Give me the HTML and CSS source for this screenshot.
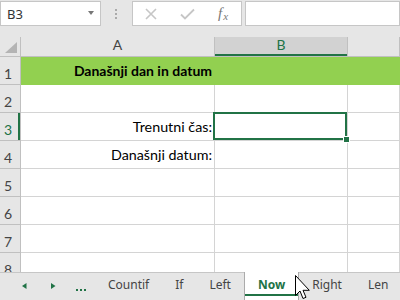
FILE: index.html
```html
<!DOCTYPE html>
<html>
  <head>
    <meta charset="UTF-8">
    <title>Današnji dan in datum</title>
    <link rel="stylesheet" href="styles.css">
  </head>
  <body>
    <div class="formulaBar">
      <div class="nameBox"><span>B3</span><span class="dropArrow"></span></div>
      <div class="barDots">
        <svg width="3" height="10" viewBox="0 0 3 10"><rect x="0" y="0" width="2" height="2"/><rect x="0" y="4" width="2" height="2"/><rect x="0" y="8" width="2" height="2"/></svg>
      </div>
      <div class="fxBox">
        <span class="fxButton">
          <svg width="12" height="12" viewBox="0 0 12 12"><path d="M1 1 L11 11 M11 1 L1 11" stroke="#c6c6c6" stroke-width="1.6" fill="none"/></svg>
        </span>
        <span class="fxButton">
          <svg width="15" height="12" viewBox="0 0 15 12"><path d="M1 6.5 L5 10.5 L14 1.5" stroke="#c6c6c6" stroke-width="1.8" fill="none"/></svg>
        </span>
        <span class="fxButton fxLabel"><i>f</i><span class="fxSub">x</span></span>
      </div>
      <div class="formulaInput"></div>
    </div>

    <div class="sheet">
      <div class="cell corner"><span class="cornerMark"></span></div>
      <div class="cell colHead">A</div>
      <div class="cell colHead colSelected">B</div>
      <div class="cell colHead"></div>

      <div class="cell rowHead">1</div>
      <div class="cell filled title">Današnji dan in datum</div>
      <div class="cell filled"></div>
      <div class="cell filled"></div>

      <div class="cell rowHead">2</div>
      <div class="cell"></div>
      <div class="cell"></div>
      <div class="cell"></div>

      <div class="cell rowHead rowSelected">3</div>
      <div class="cell">Trenutni čas:</div>
      <div class="cell activeCell"></div>
      <div class="cell"></div>

      <div class="cell rowHead">4</div>
      <div class="cell">Današnji datum:</div>
      <div class="cell"></div>
      <div class="cell"></div>

      <div class="cell rowHead">5</div>
      <div class="cell"></div>
      <div class="cell"></div>
      <div class="cell"></div>

      <div class="cell rowHead">6</div>
      <div class="cell"></div>
      <div class="cell"></div>
      <div class="cell"></div>

      <div class="cell rowHead">7</div>
      <div class="cell"></div>
      <div class="cell"></div>
      <div class="cell"></div>

      <div class="cell rowHead">8</div>
      <div class="cell"></div>
      <div class="cell"></div>
      <div class="cell"></div>
    </div>

    <div class="tabBar">
      <div class="tabNav">
        <svg width="95" height="27" viewBox="0 0 95 27">
          <path d="M26.5 10 L26.5 16 L22 13 Z"/>
          <path d="M51 10 L51 16 L55.5 13 Z"/>
          <rect x="76" y="16" width="2" height="2"/>
          <rect x="80" y="16" width="2" height="2"/>
          <rect x="84" y="16" width="2" height="2"/>
        </svg>
      </div>
      <span class="tabSep"></span>
      <span class="tab">Countif</span>
      <span class="tabSep"></span>
      <span class="tab">If</span>
      <span class="tabSep"></span>
      <span class="tab">Left</span>
      <span class="tab activeTab">Now</span>
      <span class="tab">Right</span>
      <span class="tabSep"></span>
      <span class="tab">Len</span>
    </div>

    <svg class="pointer" width="16" height="26" viewBox="0 0 16 26">
      <path d="M0.5 0.5 L0.5 20.5 L5 16 L8 23.5 L11 22.3 L8 15.3 L14.3 15.3 Z" fill="#fff" stroke="#000" stroke-width="1"/>
    </svg>
  </body>
</html>
```

FILE: styles.css
```css
:root {
  --chrome: rgb(230, 230, 230);
  --chromeBorder: rgb(198, 198, 198);
  --headBorder: rgb(192, 192, 192);
  --grid: rgb(212, 212, 212);
  --excelGreen: rgb(33, 115, 70);
  --fill: rgb(146, 208, 80);
  --tabLine: rgb(171, 171, 171);
}
body {
  margin: 0;
  width: 400px;
  height: 300px;
  overflow: hidden;
  position: relative;
  background-color: var(--chrome);
  font-family: Lato, "Liberation Sans", sans-serif;
}

/* formula bar */
.formulaBar {
  display: flex;
  height: 25px;
  padding-top: 1px;
  margin-bottom: 11px;
}
.nameBox {
  box-sizing: border-box;
  width: 101px;
  border: 1px solid var(--chromeBorder);
  background-color: #fff;
  display: flex;
  align-items: center;
  justify-content: space-between;
  padding: 0 6px 0 6px;
  font: 13px "Noto Sans", sans-serif;
  color: #333;
}
.dropArrow {
  width: 0;
  height: 0;
  border-left: 3.5px solid transparent;
  border-right: 3.5px solid transparent;
  border-top: 4px solid #777;
  margin-top: -2px;
}
.barDots {
  width: 31px;
  display: flex;
  align-items: center;
  justify-content: center;
  fill: #aaa;
}
.fxBox {
  box-sizing: border-box;
  width: 110px;
  border: 1px solid var(--chromeBorder);
  background-color: #fff;
  display: flex;
}
.fxButton {
  width: 36px;
  display: flex;
  align-items: center;
  justify-content: center;
}
.fxLabel {
  font-family: "Liberation Serif", serif;
  font-size: 15px;
  color: #777;
}
.fxSub {
  font-style: italic;
  font-size: 11px;
  margin-top: 4px;
  margin-left: 1px;
}
.formulaInput {
  flex: 1;
  margin-left: 3px;
  border: 1px solid var(--chromeBorder);
  background-color: #fff;
}

/* grid */
.sheet {
  height: 235px;
  overflow: hidden;
  display: grid;
  grid-template-columns: 21px 194px 133px 1fr;
  grid-template-rows: 20px;
  grid-auto-rows: 28px;
  background-color: #fff;
}
.cell {
  box-sizing: border-box;
  border-right: 1px solid var(--grid);
  border-bottom: 1px solid var(--grid);
  font-size: 14.3px;
  line-height: 27px;
  text-align: right;
  padding-right: 2px;
  white-space: nowrap;
  color: #000;
}
.corner, .colHead, .rowHead {
  background-color: var(--chrome);
  border-color: var(--headBorder);
  color: #444;
}
.corner {
  display: flex;
  align-items: flex-end;
  justify-content: flex-end;
  padding: 0 3px 3px 0;
}
.cornerMark {
  width: 12px;
  height: 11px;
  background-color: #b4b4b4;
  clip-path: polygon(100% 0, 100% 100%, 0 100%);
}
.colHead {
  text-align: center;
  font-size: 14px;
  line-height: 15px;
  padding: 0;
}
.colSelected {
  background-color: rgb(210, 210, 210);
  color: var(--excelGreen);
  box-shadow: inset 0 -2px var(--excelGreen);
}
.rowHead {
  text-align: left;
  font-size: 14px;
  line-height: 21px;
  padding: 6px 0 0 4px;
}
.rowSelected {
  color: var(--excelGreen);
  box-shadow: inset -2px 0 var(--excelGreen);
}
.filled {
  background-color: var(--fill);
  border-color: var(--fill);
}
.title {
  font-weight: bold;
  font-size: 14px;
}
.activeCell { position: relative; }
.activeCell::before {
  content: "";
  position: absolute;
  top: -1px;
  left: -2px;
  right: 0;
  bottom: 0;
  border: 2px solid var(--excelGreen);
}
.activeCell::after {
  content: "";
  position: absolute;
  right: -3px;
  bottom: -3px;
  width: 5px;
  height: 5px;
  border: 1px solid #fff;
  background-color: var(--excelGreen);
}

/* sheet tabs */
.tabBar {
  box-sizing: border-box;
  height: 28px;
  border-top: 1px solid var(--chromeBorder);
  display: flex;
  align-items: flex-start;
  font: 12px "Noto Sans", sans-serif;
  color: #444;
  white-space: nowrap;
}
.tabNav {
  width: 95px;
  height: 27px;
  fill: var(--excelGreen);
}
.tabSep {
  width: 1px;
  height: 19px;
  margin-top: 4px;
  background-color: var(--tabLine);
}
.tab {
  padding: 0 13px;
  line-height: 24px;
}
.activeTab {
  margin-top: -1px;
  padding-top: 1px;
  height: 27px;
  border-left: 1px solid var(--tabLine);
  border-right: 1px solid var(--tabLine);
  background: linear-gradient(var(--excelGreen), var(--excelGreen)) no-repeat left 0 bottom 4px / 100% 2px, #fff;
  color: var(--excelGreen);
  font-weight: bold;
}
.pointer {
  position: absolute;
  left: 295px;
  top: 275px;
}
```
